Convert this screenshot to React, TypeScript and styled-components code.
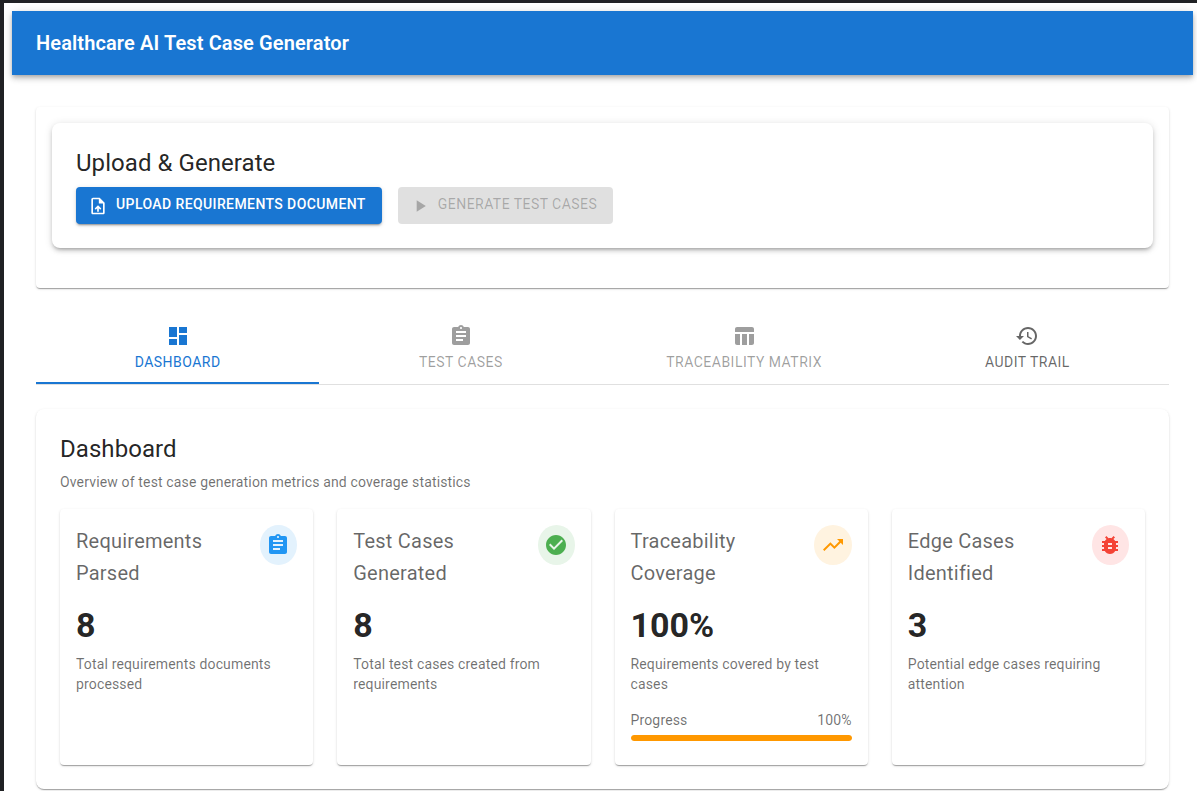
import React from "react";
import styled, { createGlobalStyle } from "styled-components";

const GlobalStyle = createGlobalStyle`
    html, body {
        margin: 0;
        height: 100%;
        overflow: hidden;
    }
    body {
        background: #202124;
        padding: 3px 0 0 4px;
        box-sizing: border-box;
        font-family: Roboto, "Liberation Sans", sans-serif;
        color: rgba(0, 0, 0, 0.87);
    }
`

const ICONS = {
    dashboard: "M3 13h8V3H3v10zm0 8h8v-6H3v6zm10 0h8V11h-8v10zm0-18v6h8V3h-8z",
    assignment: "M19 3h-4.18C14.4 1.84 13.3 1 12 1c-1.3 0-2.4.84-2.82 2H5c-1.1 0-2 .9-2 2v14c0 1.1.9 2 2 2h14c1.1 0 2-.9 2-2V5c0-1.1-.9-2-2-2zm-7 0c.55 0 1 .45 1 1s-.45 1-1 1-1-.45-1-1 .45-1 1-1zm2 14H7v-2h7v2zm3-4H7v-2h10v2zm0-4H7V7h10v2z",
    table: "M10 10.02h5V21h-5zM17 21h3c1.1 0 2-.9 2-2v-9h-5v11zm3-18H5c-1.1 0-2 .9-2 2v3h19V5c0-1.1-.9-2-2-2zM3 19c0 1.1.9 2 2 2h3V10H3v9z",
    history: "M13 3c-4.97 0-9 4.03-9 9H1l3.89 3.89.07.14L9 12H6c0-3.87 3.13-7 7-7s7 3.13 7 7-3.13 7-7 7c-1.93 0-3.68-.79-4.94-2.06l-1.42 1.42C8.27 19.99 10.51 21 13 21c4.97 0 9-4.03 9-9s-4.03-9-9-9zm-1 5v5l4.28 2.54.72-1.21-3.5-2.08V8H12z",
    upload: "M14 2H6c-1.1 0-1.99.9-1.99 2L4 20c0 1.1.89 2 1.99 2H18c1.1 0 2-.9 2-2V8l-6-6zm4 18H6V4h7v5h5v11zM8 15.01l1.41 1.41L11 14.84V19h2v-4.16l1.59 1.59L16 15.01 12.01 11 8 15.01z",
    play: "M8 5v14l11-7z",
    check: "M12 2C6.48 2 2 6.48 2 12s4.48 10 10 10 10-4.48 10-10S17.52 2 12 2zm-2 15l-5-5 1.41-1.41L10 14.17l7.59-7.59L19 8l-9 9z",
    trending: "M16 6l2.29 2.29-4.88 4.88-4-4L2 16.59 3.41 18l6-6 4 4 6.3-6.29L22 12V6z",
    bug: "M20 8h-2.81c-.45-.78-1.07-1.45-1.82-1.96L17 4.41 15.59 3l-2.17 2.17C12.96 5.06 12.49 5 12 5c-.49 0-.96.06-1.41.17L8.41 3 7 4.41l1.62 1.63C7.88 6.55 7.26 7.22 6.81 8H4v2h2.09c-.05.33-.09.66-.09 1v1H4v2h2v1c0 .34.04.67.09 1H4v2h2.81c1.04 1.79 2.97 3 5.19 3s4.15-1.21 5.19-3H20v-2h-2.09c.05-.33.09-.66.09-1v-1h2v-2h-2v-1c0-.34-.04-.67-.09-1H20V8zm-6 8h-4v-2h4v2zm0-4h-4v-2h4v2z",
}

type IconName = keyof typeof ICONS

const Icon = ({name, size = 24, color}: {name: IconName, size?: number, color: string}) => {
    return (
        <svg width={size} height={size} viewBox="0 0 24 24" fill={color} aria-hidden="true">
            <path d={ICONS[name]}/>
        </svg>
    )
}

const TABS: {label: string, icon: IconName, color: string, iconColor: string, active?: boolean}[] = [
    {label: "Dashboard", icon: "dashboard", color: "#1976d2", iconColor: "#1976d2", active: true},
    {label: "Test Cases", icon: "assignment", color: "rgba(0,0,0,0.38)", iconColor: "rgba(0,0,0,0.38)"},
    {label: "Traceability Matrix", icon: "table", color: "rgba(0,0,0,0.38)", iconColor: "rgba(0,0,0,0.38)"},
    {label: "Audit Trail", icon: "history", color: "rgba(0,0,0,0.6)", iconColor: "rgba(0,0,0,0.6)"},
]

const METRICS: {title: string, value: string, text: string, icon: IconName, color: string, tint: string, progress?: number}[] = [
    {title: "Requirements Parsed", value: "8", text: "Total requirements documents processed", icon: "assignment", color: "#2196f3", tint: "#e3f2fd"},
    {title: "Test Cases Generated", value: "8", text: "Total test cases created from requirements", icon: "check", color: "#4caf50", tint: "#e8f5e9"},
    {title: "Traceability Coverage", value: "100%", text: "Requirements covered by test cases", icon: "trending", color: "#ff9800", tint: "#fff3e0", progress: 100},
    {title: "Edge Cases Identified", value: "3", text: "Potential edge cases requiring attention", icon: "bug", color: "#f44336", tint: "#ffe5e5"},
]

const App = () => {
    return (
        <Page>
            <GlobalStyle/>
            <AppBar>
                <AppTitle>Healthcare AI Test Case Generator</AppTitle>
            </AppBar>
            <Main>
                <UploadPaper>
                    <UploadCard>
                        <UploadTitle>Upload &amp; Generate</UploadTitle>
                        <Actions>
                            <PrimaryButton>
                                <Icon name="upload" size={20} color="#fff"/>
                                <ButtonLabel>Upload Requirements Document</ButtonLabel>
                            </PrimaryButton>
                            <DisabledButton disabled>
                                <Icon name="play" size={20} color="rgba(0,0,0,0.26)"/>
                                <ButtonLabel>Generate Test Cases</ButtonLabel>
                            </DisabledButton>
                        </Actions>
                    </UploadCard>
                </UploadPaper>
                <Tabs>
                    {TABS.map(tab => (
                        <Tab key={tab.label} $color={tab.color} $active={tab.active}>
                            <Icon name={tab.icon} color={tab.iconColor}/>
                            {tab.label}
                        </Tab>
                    ))}
                </Tabs>
                <DashboardPaper>
                    <DashboardTitle>Dashboard</DashboardTitle>
                    <DashboardText>Overview of test case generation metrics and coverage statistics</DashboardText>
                    <MetricGrid>
                        {METRICS.map(metric => (
                            <MetricCard key={metric.title}>
                                <MetricHead>
                                    <MetricTitle>{metric.title}</MetricTitle>
                                    <MetricIcon $tint={metric.tint}>
                                        <Icon name={metric.icon} color={metric.color}/>
                                    </MetricIcon>
                                </MetricHead>
                                <MetricValue>{metric.value}</MetricValue>
                                <MetricText>{metric.text}</MetricText>
                                {metric.progress !== undefined && (
                                    <Progress>
                                        <ProgressLabels>
                                            <span>Progress</span>
                                            <span>{metric.progress}%</span>
                                        </ProgressLabels>
                                        <ProgressTrack>
                                            <ProgressBar $color={metric.color} style={{width: `${metric.progress}%`}}/>
                                        </ProgressTrack>
                                    </Progress>
                                )}
                            </MetricCard>
                        ))}
                    </MetricGrid>
                </DashboardPaper>
            </Main>
        </Page>
    )
}

export default App

const Page = styled.div`
    width: 1197px;
    height: 788px;
    box-sizing: border-box;
    padding: 8px;
    background: #fff;
    overflow: hidden;
`
const AppBar = styled.header`
    height: 64px;
    padding: 0 24px;
    display: flex;
    align-items: center;
    background: #1976d2;
    color: #fff;
    box-shadow: 0 2px 4px -1px rgba(0,0,0,0.2), 0 4px 5px 0 rgba(0,0,0,0.14), 0 1px 10px 0 rgba(0,0,0,0.12);
`
const AppTitle = styled.h1`
    margin: 0;
    font-size: 20px;
    font-weight: 600;
    line-height: 32px;
    letter-spacing: 0.12px;
`
const Main = styled.main`
    padding: 32px 24px 0;
`
const UploadPaper = styled.section`
    padding: 16px 16px 40px;
    border-radius: 4px;
    background: #fff;
    box-shadow: 0 2px 1px -1px rgba(0,0,0,0.2), 0 1px 1px 0 rgba(0,0,0,0.14), 0 1px 3px 0 rgba(0,0,0,0.12);
`
const UploadCard = styled.div`
    padding: 24px;
    height: 125px;
    box-sizing: border-box;
    border-radius: 8px;
    background: #fff;
    box-shadow: 0 3px 3px -2px rgba(0,0,0,0.2), 0 3px 4px 0 rgba(0,0,0,0.14), 0 1px 8px 0 rgba(0,0,0,0.12);
`
const UploadTitle = styled.h2`
    margin: 0 0 8px;
    font-size: 24px;
    font-weight: 400;
    line-height: 32px;
    letter-spacing: 0.06px;
`
const Actions = styled.div`
    display: flex;
    gap: 16px;
`
const BaseButton = styled.button`
    display: inline-flex;
    align-items: center;
    gap: 8px;
    height: 37px;
    padding: 0 16px 0 12px;
    border: 0;
    border-radius: 4px;
    font-family: inherit;
    font-size: 14px;
    font-weight: 500;
    letter-spacing: 0.4px;
    text-transform: uppercase;
    white-space: nowrap;
`
const ButtonLabel = styled.span`
    margin-bottom: 4px;
`
const PrimaryButton = styled(BaseButton)`
    background: #1976d2;
    color: #fff;
    box-shadow: 0 3px 1px -2px rgba(0,0,0,0.2), 0 2px 2px 0 rgba(0,0,0,0.14), 0 1px 5px 0 rgba(0,0,0,0.12);
`
const DisabledButton = styled(BaseButton)`
    background: rgba(0,0,0,0.12);
    color: rgba(0,0,0,0.26);
    font-weight: 400;
    letter-spacing: 0.45px;
`
const Tabs = styled.nav`
    margin-top: 20px;
    display: grid;
    grid-template-columns: repeat(4, 1fr);
    border-bottom: 1px solid #e0e0e0;
`
const Tab = styled.div<{$color: string, $active?: boolean}>`
    height: 76px;
    box-sizing: border-box;
    padding-top: 4px;
    display: flex;
    flex-direction: column;
    align-items: center;
    justify-content: center;
    gap: 6px;
    font-size: 14px;
    letter-spacing: 0.48px;
    text-transform: uppercase;
    color: ${props => props.$color};
    border-bottom: 2px solid ${props => props.$active ? "#1976d2" : "transparent"};
`
const DashboardPaper = styled.section`
    margin-top: 24px;
    padding: 24px;
    height: 380px;
    box-sizing: border-box;
    border-radius: 8px;
    background: #fff;
    box-shadow: 0 2px 1px -1px rgba(0,0,0,0.2), 0 1px 1px 0 rgba(0,0,0,0.14), 0 1px 3px 0 rgba(0,0,0,0.12);
`
const DashboardTitle = styled.h2`
    margin: 0 0 7px;
    font-size: 24px;
    font-weight: 400;
    line-height: 32px;
    letter-spacing: 0.06px;
`
const DashboardText = styled.p`
    margin: 0 0 17px;
    font-size: 14px;
    line-height: 20px;
    letter-spacing: 0.15px;
    color: rgba(0,0,0,0.56);
`
const MetricGrid = styled.div`
    display: grid;
    grid-template-columns: repeat(4, 1fr);
    gap: 24px;
`
const MetricCard = styled.article`
    height: 256px;
    box-sizing: border-box;
    padding: 16px;
    border-radius: 4px;
    background: #fff;
    box-shadow: 0 2px 1px -1px rgba(0,0,0,0.2), 0 1px 1px 0 rgba(0,0,0,0.14), 0 1px 3px 0 rgba(0,0,0,0.12);
`
const MetricHead = styled.div`
    display: flex;
    justify-content: space-between;
    align-items: flex-start;
`
const MetricTitle = styled.h3`
    margin: 0;
    font-size: 20px;
    font-weight: 400;
    line-height: 32px;
    letter-spacing: 0.23px;
    color: rgba(0,0,0,0.6);
`
const MetricIcon = styled.div<{$tint: string}>`
    width: 40px;
    height: 40px;
    display: flex;
    align-items: center;
    justify-content: center;
    border-radius: 50%;
    background: ${props => props.$tint};
`
const MetricValue = styled.div`
    margin-top: 15px;
    font-size: 34px;
    font-weight: 700;
    line-height: 42px;
`
const MetricText = styled.p`
    margin: 8px 0 0;
    font-size: 14px;
    line-height: 20px;
    letter-spacing: 0.15px;
    color: rgba(0,0,0,0.56);
`
const Progress = styled.div`
    margin-top: 16px;
`
const ProgressLabels = styled.div`
    display: flex;
    justify-content: space-between;
    margin-bottom: 5px;
    font-size: 14px;
    line-height: 20px;
    letter-spacing: 0.15px;
    color: rgba(0,0,0,0.56);
`
const ProgressTrack = styled.div`
    height: 6px;
    border-radius: 3px;
    background: #ffe0b2;
    overflow: hidden;
`
const ProgressBar = styled.div<{$color: string}>`
    height: 100%;
    border-radius: 3px;
    background: ${props => props.$color};
`
